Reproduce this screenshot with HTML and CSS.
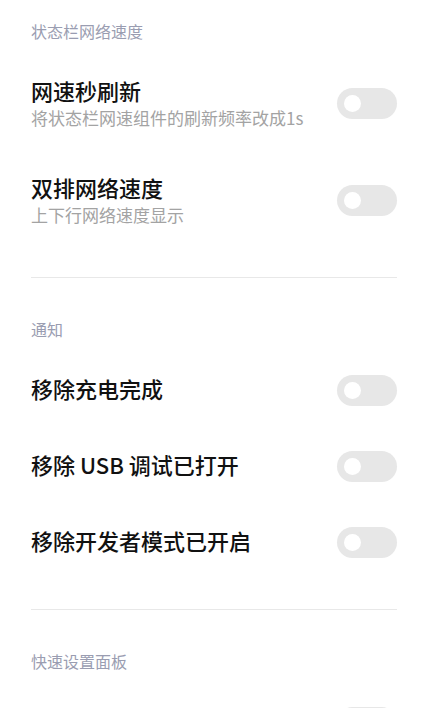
FILE: index.html
```html
<!DOCTYPE html>
<html lang="zh-CN">
<head>
<meta charset="utf-8">
<title>设置</title>
<link rel="stylesheet" href="styles.css">
</head>
<body>
<div class="page">
  <section class="group">
    <div class="group-title">状态栏网络速度</div>
    <div class="item">
      <div class="text">
        <div class="title">网速秒刷新</div>
        <div class="sub">将状态栏网速组件的刷新频率改成1s</div>
      </div>
      <div class="switch"><span class="knob"></span></div>
    </div>
    <div class="item">
      <div class="text">
        <div class="title">双排网络速度</div>
        <div class="sub">上下行网络速度显示</div>
      </div>
      <div class="switch"><span class="knob"></span></div>
    </div>
  </section>
  <hr class="divider">
  <section class="group">
    <div class="group-title">通知</div>
    <div class="item">
      <div class="text"><div class="title">移除充电完成</div></div>
      <div class="switch"><span class="knob"></span></div>
    </div>
    <div class="item">
      <div class="text"><div class="title">移除 USB 调试已打开</div></div>
      <div class="switch"><span class="knob"></span></div>
    </div>
    <div class="item">
      <div class="text"><div class="title">移除开发者模式已开启</div></div>
      <div class="switch"><span class="knob"></span></div>
    </div>
  </section>
  <hr class="divider">
  <section class="group">
    <div class="group-title">快速设置面板</div>
    <div class="item">
      <div class="text"><div class="title">&nbsp;</div></div>
      <div class="switch"><span class="knob"></span></div>
    </div>
  </section>
</div>
</body>
</html>
```
FILE: styles.css
```css
html, body {
  margin: 0;
  padding: 0;
  background: #ffffff;
}
body {
  font-family: "Noto Sans CJK SC", "Noto Sans", sans-serif;
  overflow: hidden;
}
.page {
  padding: 20px 32px 0 31px;
}
.group-title {
  font-size: 16px;
  line-height: 22px;
  color: #9a9db1;
  margin-bottom: 13px;
}
.item {
  display: flex;
  align-items: center;
  justify-content: space-between;
  padding: 22px 0 23px;
}
.text {
  display: flex;
  flex-direction: column;
  margin-top: -2px;
  margin-bottom: 2px;
}
.title {
  font-size: 22px;
  line-height: 31px;
  font-weight: 500;
  color: #111111;
}
.sub {
  font-size: 17px;
  line-height: 21px;
  color: #a3a3a3;
  margin-top: 1px;
  margin-bottom: -1px;
}
.switch {
  width: 60px;
  height: 31px;
  border-radius: 16px;
  background: #e7e7e7;
  display: flex;
  align-items: center;
  padding-left: 7px;
  box-sizing: border-box;
  flex-shrink: 0;
}
.knob {
  width: 17px;
  height: 17px;
  border-radius: 50%;
  background: #ffffff;
}
.divider {
  border: 0;
  height: 1px;
  background: #e8e8e8;
  margin: 28px 0 40px;
}
```
